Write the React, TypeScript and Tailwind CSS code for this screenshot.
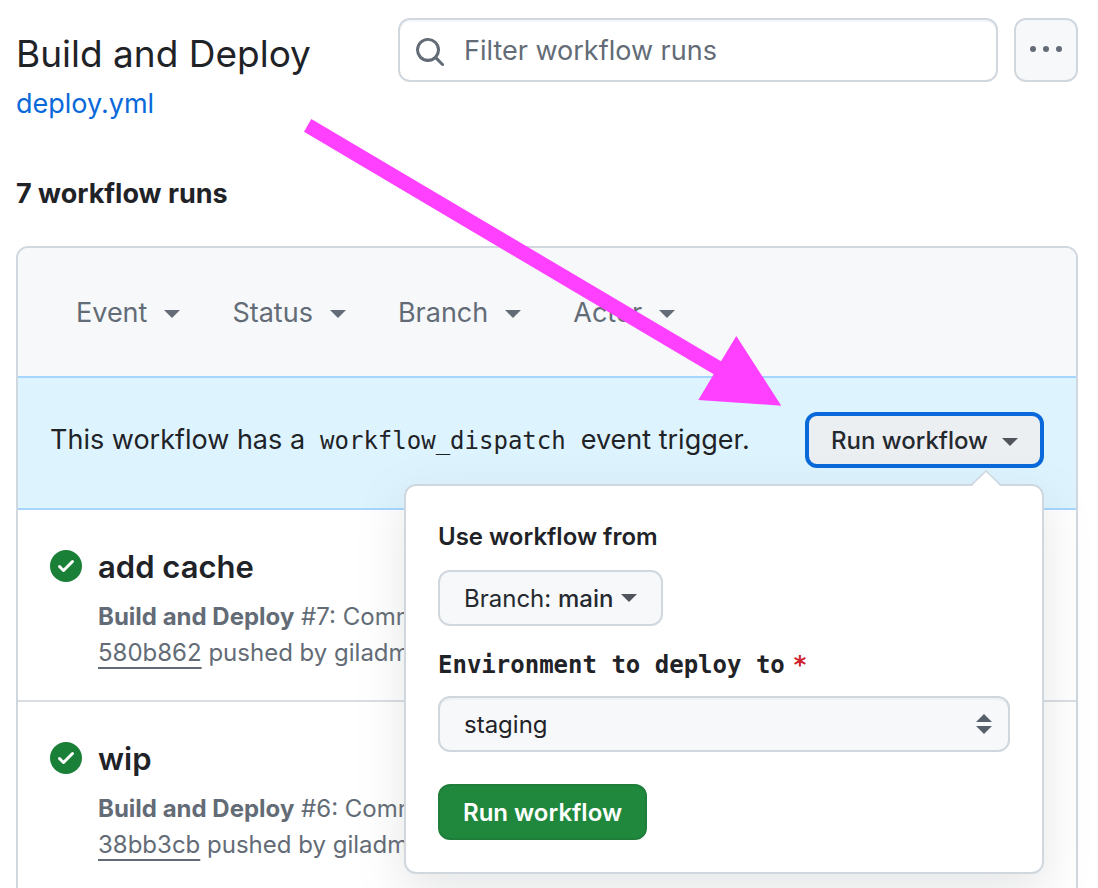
import React from 'react';

const runs = [
  { title: 'add cache', number: 7, sha: '580b862', author: 'giladm' },
  { title: 'wip', number: 6, sha: '38bb3cb', author: 'giladm' },
];

const filters = ['Event', 'Status', 'Branch', 'Actor'];

function Caret({ className = '' }: { className?: string }) {
  return (
    <svg viewBox="0 0 16 8" className={`h-2 w-4 shrink-0 ${className}`} fill="currentColor" aria-hidden="true">
      <path d="M0 0h16L8 8z" />
    </svg>
  );
}

function SearchIcon() {
  return (
    <svg viewBox="0 0 16 16" className="mt-1 size-8 shrink-0" fill="currentColor" aria-hidden="true">
      <path d="M10.68 11.74a6 6 0 0 1-7.922-8.982 6 6 0 0 1 8.982 7.922l3.04 3.04a.749.749 0 0 1-.326 1.275.749.749 0 0 1-.734-.215ZM11.5 7a4.499 4.499 0 1 0-8.997 0A4.499 4.499 0 0 0 11.5 7Z" />
    </svg>
  );
}

function SuccessIcon() {
  return (
    <svg viewBox="0 0 16 16" className="mt-2 size-8 shrink-0 text-[#1a7f37]" fill="currentColor" aria-hidden="true">
      <path d="M8 16A8 8 0 1 1 8 0a8 8 0 0 1 0 16Zm3.78-9.72a.751.751 0 0 0-.018-1.042.751.751 0 0 0-1.042-.018L6.75 9.19 5.28 7.72a.751.751 0 0 0-1.042.018.751.751 0 0 0-.018 1.042l2 2a.75.75 0 0 0 1.06 0Z" />
    </svg>
  );
}

function DispatchMenu() {
  return (
    <form
      onSubmit={(e) => e.preventDefault()}
      className="absolute top-full right-0 z-10 mt-4 flex w-[640px] flex-col items-start rounded-xl border-2 border-[#d0d7de] bg-white px-8 pt-[33px] pb-8 shadow-[0_16px_48px_rgba(120,125,130,0.2)]"
    >
      <svg viewBox="0 0 32 16" className="absolute -top-4 right-10 h-4 w-8" aria-hidden="true">
        <path d="M2 16 16 2l14 14z" fill="#fff" />
        <path d="M1 15 16 1l15 14" fill="none" stroke="#d0d7de" strokeWidth="1.5" />
      </svg>
      <p className="text-2xl leading-9 font-semibold">Use workflow from</p>
      <button
        type="button"
        className="mt-[15px] flex h-14 items-center gap-2 rounded-xl border-2 border-[#d0d7de] bg-[#f6f8fa] px-6 text-2xl text-[#24292f]"
      >
        <span className="pt-0.5">
          Branch: <span className="font-medium">main</span>
        </span>
        <Caret className="text-[#4f555b]" />
      </button>
      <label
        htmlFor="environment"
        className="mt-[21px] font-['DejaVu_Sans_Mono',monospace] text-2xl leading-9 font-bold"
      >
        Environment to deploy to<span className="ml-2 text-[#cf222e]">*</span>
      </label>
      <div className="relative mt-[13px] w-full">
        <select
          id="environment"
          defaultValue="staging"
          className="h-14 w-full appearance-none rounded-xl border-2 border-[#d0d7de] bg-[#f6f8fa] px-6 pt-0.5 text-2xl shadow-[inset_0_2px_0_rgba(208,215,222,0.2)]"
        >
          <option value="staging">staging</option>
        </select>
        <svg
          viewBox="0 0 16 20"
          className="pointer-events-none absolute top-[18px] right-[18px] h-5 w-4"
          fill="#57606a"
          aria-hidden="true"
        >
          <path d="M0 8h16L8 0zM0 12h16l-8 8z" />
        </svg>
      </div>
      <button
        type="submit"
        className="mt-8 h-14 rounded-xl border-2 border-[#1f7f3a] bg-[#1f883d] px-[23px] pt-0.5 text-2xl font-semibold text-white"
      >
        Run workflow
      </button>
    </form>
  );
}

export default function App() {
  return (
    <main className="relative h-screen overflow-hidden bg-white pt-[18px] pr-5 pl-4 font-[Inter,sans-serif] text-[#1f2328]">
      <header className="flex items-start gap-4">
        <div className="w-[366px] shrink-0 pt-3">
          <h1 className="text-[37px] leading-[48px] whitespace-nowrap">Build and Deploy</h1>
          <a href="#deploy" className="mt-[5px] block text-[27px] leading-[42px] text-[#0969da]">
            deploy.yml
          </a>
        </div>
        <label className="flex h-16 min-w-0 flex-1 items-center gap-[18px] rounded-xl border-2 border-[#d0d7de] px-3.5 text-[#636c76] shadow-[inset_0_2px_0_rgba(208,215,222,0.2)]">
          <SearchIcon />
          <input
            type="text"
            aria-label="Filter workflow runs"
            placeholder="Filter workflow runs"
            className="min-w-0 flex-1 bg-transparent pt-0.5 text-[27px] outline-none placeholder:text-[#636c76]"
          />
        </label>
        <button
          type="button"
          aria-label="More options"
          className="flex size-16 shrink-0 items-center justify-center rounded-xl border-2 border-[#d0d7de] bg-[#f6f8fa] text-[#636c76]"
        >
          <svg viewBox="0 0 16 16" className="size-8 overflow-visible" fill="currentColor" aria-hidden="true">
            <path d="M8 9a1.5 1.5 0 1 0 0-3 1.5 1.5 0 0 0 0 3ZM1.5 9a1.5 1.5 0 1 0 0-3 1.5 1.5 0 0 0 0 3Zm13 0a1.5 1.5 0 1 0 0-3 1.5 1.5 0 0 0 0 3Z" />
          </svg>
        </button>
      </header>

      <h2 className="mt-12 text-[27px] leading-[42px] font-bold">7 workflow runs</h2>

      <section className="mt-[31px] rounded-t-xl border-2 border-[#d0d7de]">
        <div className="flex h-32 items-center gap-[52px] rounded-t-[10px] bg-[#f6f8fa] px-[58px] pt-0.5 text-[27px] text-[#636c76]">
          {filters.map((name) => (
            <button key={name} type="button" className="flex items-center gap-[17px]">
              {name}
              <Caret className="mt-0.5" />
            </button>
          ))}
        </div>

        <div className="flex items-start justify-between border-y-2 border-[#a5d6ff] bg-[#ddf4ff] px-8 pt-[34px] pb-10">
          <p className="text-[27px] leading-[56px] whitespace-nowrap">
            This workflow has a
            <code className="mx-[15px] font-['DejaVu_Sans_Mono',monospace] text-2xl leading-none">
              workflow_dispatch
            </code>
            event trigger.
          </p>
          <div className="relative shrink-0">
            <button
              type="button"
              aria-expanded="true"
              className="flex h-14 items-center gap-3.5 rounded-xl border-4 border-[#0969da] bg-[#eceff2] px-[22px] pt-0.5 text-2xl font-medium text-[#24292f]"
            >
              Run workflow
              <Caret className="mt-0.5 text-[#4f555b]" />
            </button>
            <DispatchMenu />
          </div>
        </div>

        {runs.map((run) => (
          <article key={run.number} className="flex gap-4 border-b-2 border-[#d8dee4] px-8 pt-8 pb-[29px]">
            <SuccessIcon />
            <div className="max-w-[350px]">
              <h3 className="text-[31px] leading-[50px] font-semibold">{run.title}</h3>
              <p className="mt-[7px] text-2xl leading-9 text-[#636c76]">
                <span className="font-bold">Build and Deploy</span> #{run.number}: Commit{' '}
                <a href={`#${run.sha}`} className="underline decoration-2 underline-offset-[6px]">
                  {run.sha}
                </a>{' '}
                pushed by {run.author}
              </p>
            </div>
          </article>
        ))}
      </section>

      <svg
        viewBox="0 0 478 287"
        className="pointer-events-none absolute top-[119px] left-[304px] z-20 h-[287px] w-[478px]"
        aria-hidden="true"
      >
        <path d="M7.3 0 417 242.3 432.3 217 477.3 286.7 394.3 281 409.7 255.3 0 12.7z" fill="#ff40ff" />
      </svg>
    </main>
  );
}
